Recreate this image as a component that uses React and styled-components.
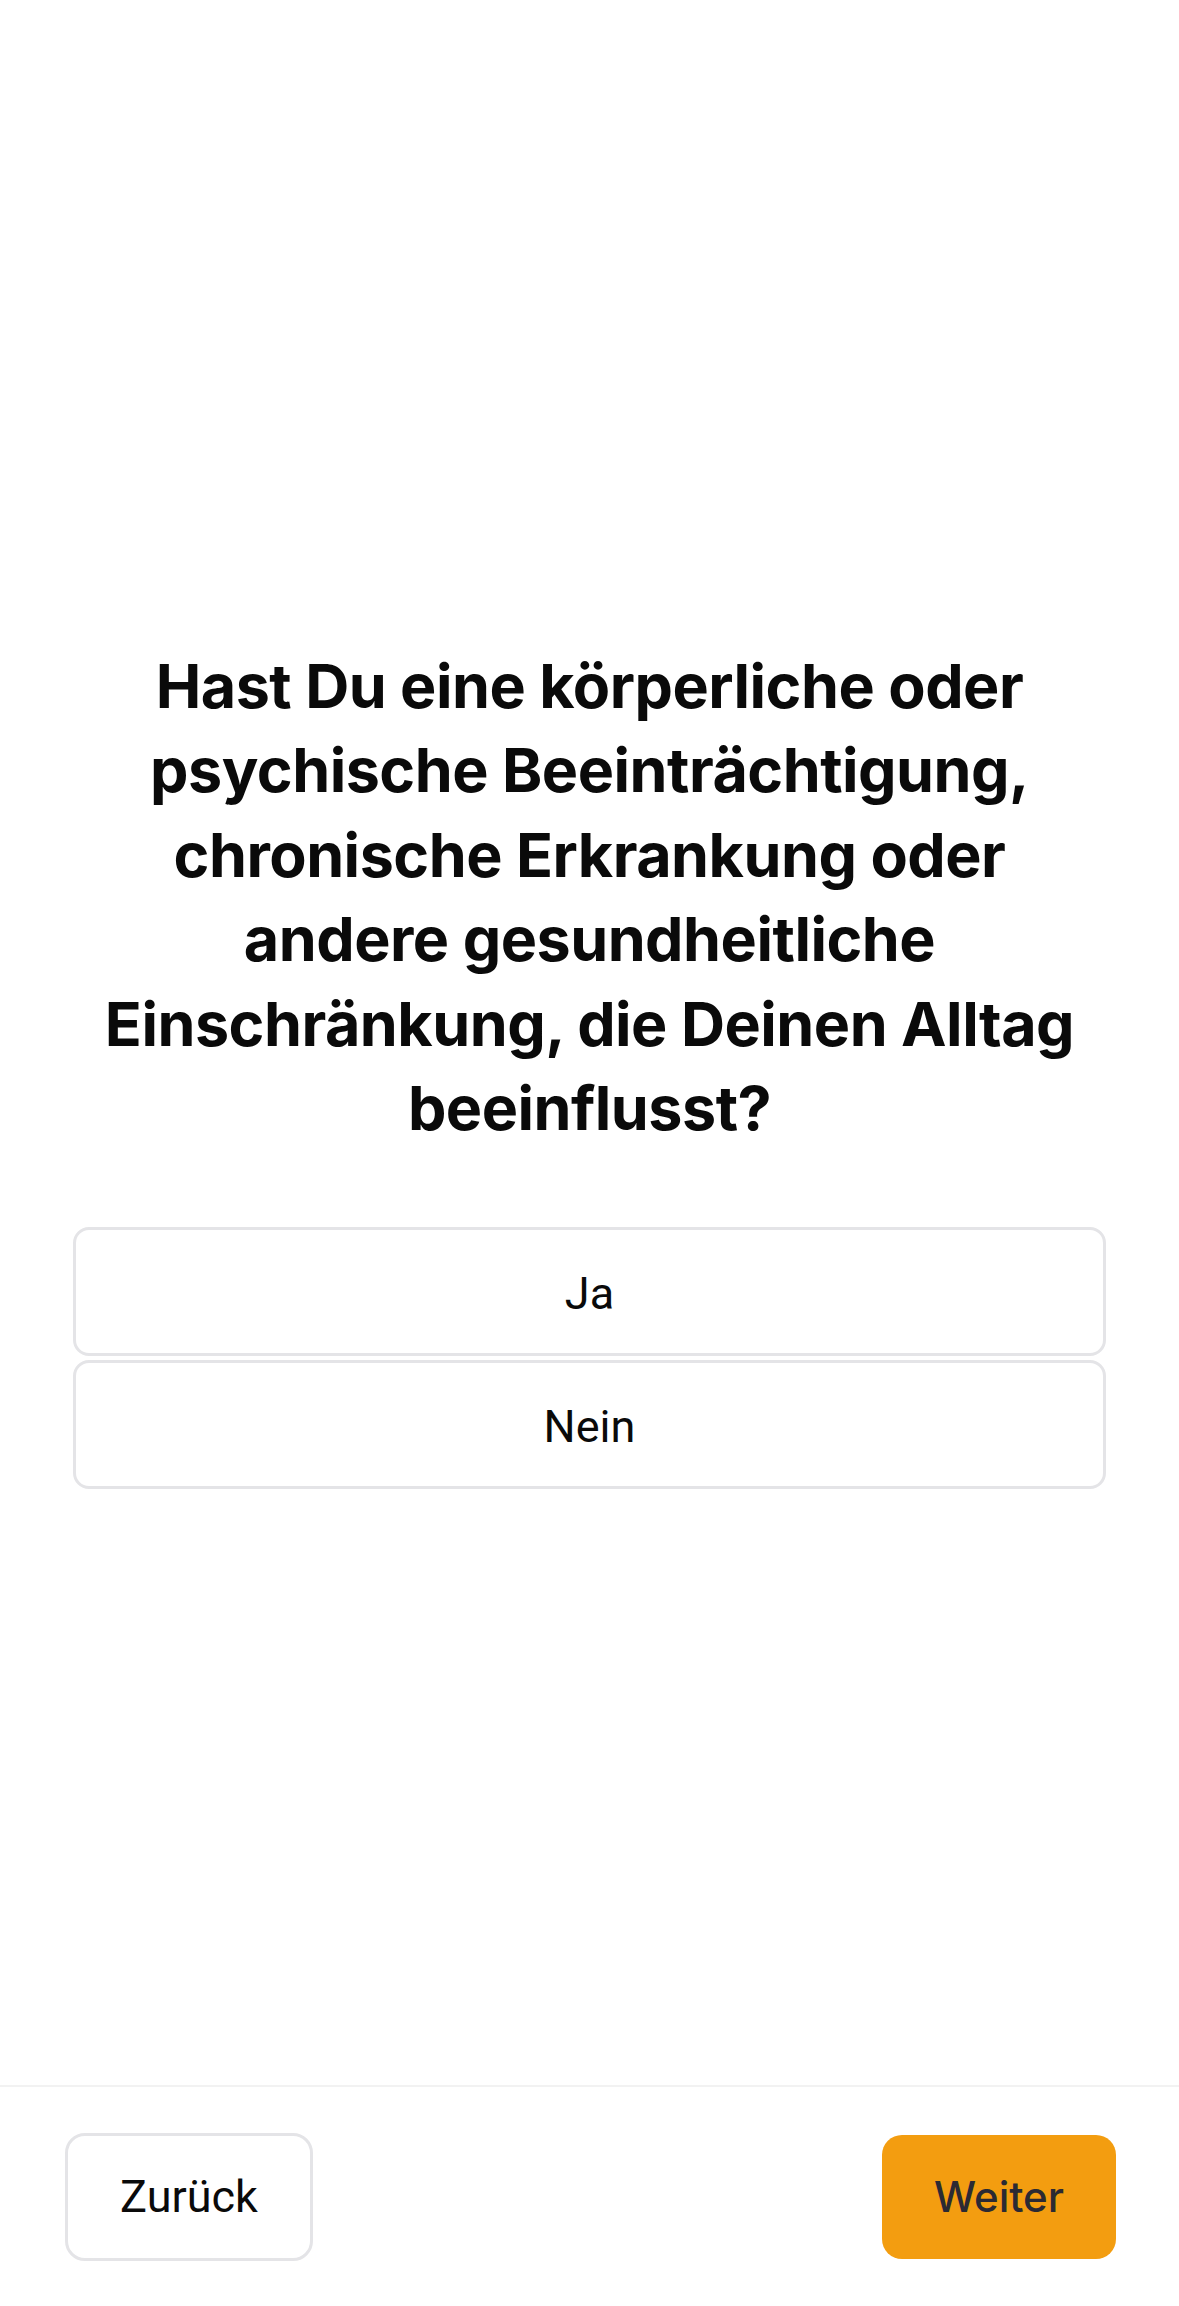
import React, { useState } from "react";
import styled, { createGlobalStyle } from "styled-components";

const GlobalStyle = createGlobalStyle`
    html, body {
        margin: 0;
        padding: 0;
        background: #ffffff;
    }
    * {
        box-sizing: border-box;
    }
`;

const Page = styled.div`
    min-height: 2306px;
    display: flex;
    flex-direction: column;
    background: #ffffff;
`;

const Main = styled.main`
    flex: 1;
    padding: 644px 73px 0 73px;
    display: flex;
    flex-direction: column;
`;

const Question = styled.h1`
    margin: 0 0 77px 0;
    font-family: Inter, "Noto Sans", sans-serif;
    font-weight: 700;
    font-size: 61px;
    line-height: 84.4px;
    letter-spacing: -0.5px;
    text-align: center;
    color: #0a0a0a;
`;

const Options = styled.div`
    display: flex;
    flex-direction: column;
    gap: 4px;
`;

const Option = styled.button`
    height: 129px;
    width: 100%;
    border: 3px solid ${(p) => (p.$selected ? "#f39c12" : "#e4e4e7")};
    border-radius: 16px;
    background: #ffffff;
    font-family: Roboto, "Liberation Sans", sans-serif;
    font-size: 45px;
    padding-top: 4px;
    color: #0a0a0a;
    cursor: pointer;
`;

const Footer = styled.footer`
    height: 221px;
    border-top: 2px solid #f2f2f2;
    padding: 0 63px 0 65px;
    display: flex;
    align-items: center;
    justify-content: space-between;
`;

const NavButton = styled.button`
    height: ${(p) => (p.$primary ? "124px" : "128px")};
    width: ${(p) => (p.$primary ? "234px" : "248px")};
    border-radius: 20px;
    border: ${(p) => (p.$primary ? "none" : "3px solid #e4e4e7")};
    background: ${(p) => (p.$primary ? "#f39d10" : "#ffffff")};
    color: ${(p) => (p.$primary ? "#2b2a33" : "#0a0a0a")};
    font-family: ${(p) => (p.$primary ? "Inter" : "Roboto")}, "Liberation Sans", sans-serif;
    font-weight: ${(p) => (p.$primary ? 500 : 400)};
    font-size: ${(p) => (p.$primary ? "42px" : "45px")};
    cursor: pointer;
`;

export default function App() {
    const [answer, setAnswer] = useState(null);

    return (
        <Page>
            <GlobalStyle />
            <Main>
                <Question>
                    Hast Du eine körperliche oder psychische Beeinträchtigung, chronische Erkrankung oder andere gesundheitliche Einschränkung, die Deinen Alltag beeinflusst?
                </Question>
                <Options>
                    {["Ja", "Nein"].map((label) => (
                        <Option
                            key={label}
                            $selected={answer === label}
                            onClick={() => setAnswer(label)}
                        >
                            {label}
                        </Option>
                    ))}
                </Options>
            </Main>
            <Footer>
                <NavButton>Zurück</NavButton>
                <NavButton $primary>Weiter</NavButton>
            </Footer>
        </Page>
    );
}
